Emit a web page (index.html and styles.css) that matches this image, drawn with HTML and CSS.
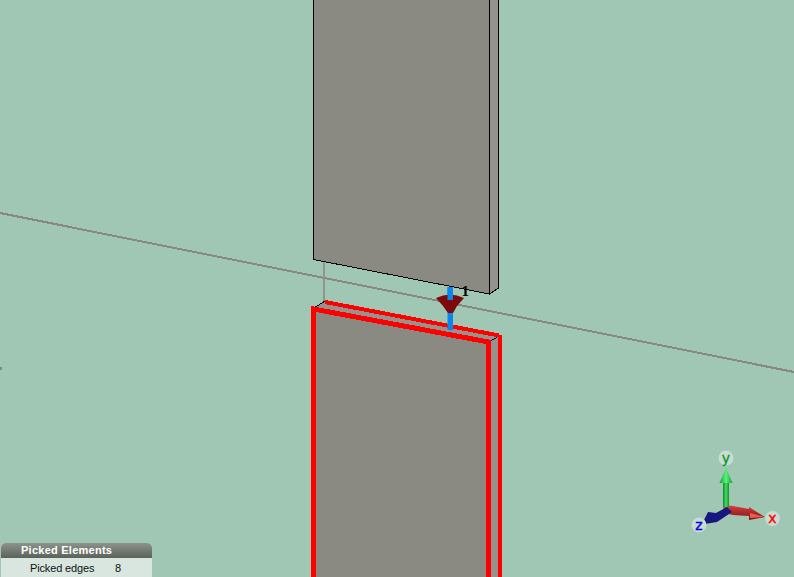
FILE: index.html

```html
<!DOCTYPE html>
<html lang="en">
<head>
  <meta charset="UTF-8" />
  <meta name="viewport" content="width=device-width, initial-scale=1" />
  <title>Picked Elements</title>
  <link rel="stylesheet" href="styles.css">
</head>
<body>

  <div class="viewport">
    <svg class="scene" width="794" height="577" viewBox="0 0 794 577">
      <defs>
        <linearGradient id="yShaft" x1="0" x2="1" y1="0" y2="0">
          <stop offset="0" stop-color="#0c8a2a" />
          <stop offset="0.5" stop-color="#3fe05f" />
          <stop offset="1" stop-color="#0f8f30" />
        </linearGradient>
        <linearGradient id="yHead" x1="0" x2="1" y1="0" y2="0">
          <stop offset="0" stop-color="#12a035" />
          <stop offset="0.5" stop-color="#5cf07a" />
          <stop offset="1" stop-color="#12a035" />
        </linearGradient>
        <linearGradient id="xShaft" x1="0" x2="0" y1="0" y2="1">
          <stop offset="0" stop-color="#d8403f" />
          <stop offset="1" stop-color="#7a1414" />
        </linearGradient>
      </defs>

      <!-- small tick on the left edge -->
      <rect x="0" y="367" width="2" height="3" fill="#7f8a84" />

      <!-- work plane line -->
      <line class="plane-line" x1="0" y1="213" x2="794" y2="372" />
      <line class="hidden-edge" x1="324" y1="261" x2="324" y2="302" />

      <!-- upper plate -->
      <polygon class="face" points="313.5,-1 489.5,-1 489.5,294 313.5,259.5" />
      <polygon class="side" points="489.5,-1 498.5,-1 498.5,288 489.5,294" />
      <polyline class="edge" points="313.5,-1 313.5,259.5 489.5,294 498.5,288 498.5,-1" />
      <line class="edge" x1="489.5" y1="-1" x2="489.5" y2="294" />

      <!-- lower plate -->
      <polygon class="side" points="314,308 325,301 499,336 489,342" />
      <polygon class="face" points="314,308 489,342 489,578 314,578" />
      <polygon class="side" points="489,342 499,336 499,578 489,578" />
      <line class="edge" x1="314" y1="308" x2="325" y2="301" />
      <line class="edge" x1="489" y1="342" x2="499" y2="336" />
      <polyline class="picked" points="313.5,578 313.5,309 488.5,342 488.5,578" />
      <line class="picked picked-back" x1="325" y1="302" x2="499" y2="335.5" />
      <line class="picked picked-back" x1="499.5" y1="335" x2="499.5" y2="578" />

      <!-- load marker -->
      <rect class="marker-stem" x="447.5" y="287" width="5.5" height="43" />
      <path class="marker-cone" d="M436 298 Q450 291 464 298 L457 306 L453 313 H448 L443 306 Z" />
      <rect class="marker-stem" x="447.5" y="287" width="5.5" height="13" />
      <text class="marker-num" x="461.5" y="295.5">1</text>

      <!-- triad -->
      <path d="M723 505 L733 506 L749 509 L749 507 L765 517 L749 520 L749 516 L733 515 L724 513 Z" fill="url(#xShaft)" />
      <polygon points="750,513 765,517 750,518" fill="#ef5a50" />
      <polygon points="727,507 732,512 717,522 705,524 704,520 708,512 716,513" fill="#16187f" />
      <rect x="723" y="481" width="6" height="26" fill="url(#yShaft)" />
      <polygon points="726,468 732.5,483 719.5,483" fill="url(#yHead)" />

      <circle class="axis-badge" cx="726" cy="458" r="7.5" />
      <text class="axis-label axis-y" x="726" y="462.5">y</text>
      <circle class="axis-badge" cx="772.5" cy="518.5" r="7.5" />
      <text class="axis-label axis-x" x="772.5" y="523">x</text>
      <circle class="axis-badge" cx="699" cy="525" r="7.5" />
      <text class="axis-label axis-z" x="699" y="529.5">z</text>
    </svg>

    <div class="picked-panel">
      <div class="picked-title">Picked Elements</div>
      <div class="picked-row">
        <span class="picked-name">Picked edges</span>
        <span class="picked-count">8</span>
      </div>
    </div>
  </div>

</body>
</html>
```

FILE: styles.css

```css
body {
  margin: 0;
  background: #9fc7b3;
  font-family: 'Liberation Sans', Arial, sans-serif;
}
.viewport {
  position: relative;
  width: 794px;
  height: 577px;
  overflow: hidden;
}
.scene {
  display: block;
}
.face {
  fill: #8a8a82;
}
.side {
  fill: #96938e;
}
.edge {
  fill: none;
  stroke: #000;
  stroke-width: 1;
  shape-rendering: crispEdges;
}
.plane-line {
  stroke: #8a8680;
  stroke-width: 2;
  shape-rendering: crispEdges;
}
.hidden-edge {
  stroke: #8f9490;
  stroke-width: 2;
  shape-rendering: crispEdges;
}
.picked {
  fill: none;
  stroke: #ff0000;
  stroke-width: 5;
  stroke-linejoin: miter;
  shape-rendering: crispEdges;
}
.picked-back {
  stroke-width: 4;
}
.marker-stem {
  fill: #0a84ee;
}
.marker-cone {
  fill: #7d0a0a;
}
.marker-num {
  font-family: 'Liberation Serif', serif;
  font-size: 15px;
  font-weight: bold;
  fill: #000;
}
.axis-badge {
  fill: #c9dcd3;
}
.axis-label {
  font-family: 'DejaVu Sans', sans-serif;
  font-size: 14px;
  text-anchor: middle;
  stroke-width: 0.4;
}
.axis-y {
  fill: #0a9a2a;
  stroke: #0a9a2a;
}
.axis-x {
  fill: #ff0000;
  stroke: #ff0000;
}
.axis-z {
  fill: #0000ee;
  stroke: #0000ee;
}
.picked-panel {
  position: absolute;
  left: 1px;
  bottom: 0;
  width: 151px;
  height: 34px;
  background: #d9e6df;
  border-radius: 5px 5px 0 0;
  overflow: hidden;
}
.picked-title {
  height: 15px;
  padding-left: 20px;
  background: linear-gradient(#8d938b, #5a625a);
  color: #fff;
  font-size: 11px;
  font-weight: bold;
  line-height: 15px;
  letter-spacing: 0.25px;
}
.picked-row {
  display: flex;
  padding: 3px 0 0 29px;
  color: #111;
  font-size: 11px;
  line-height: 14px;
}
.picked-name {
  width: 85px;
  letter-spacing: -0.15px;
}
```
